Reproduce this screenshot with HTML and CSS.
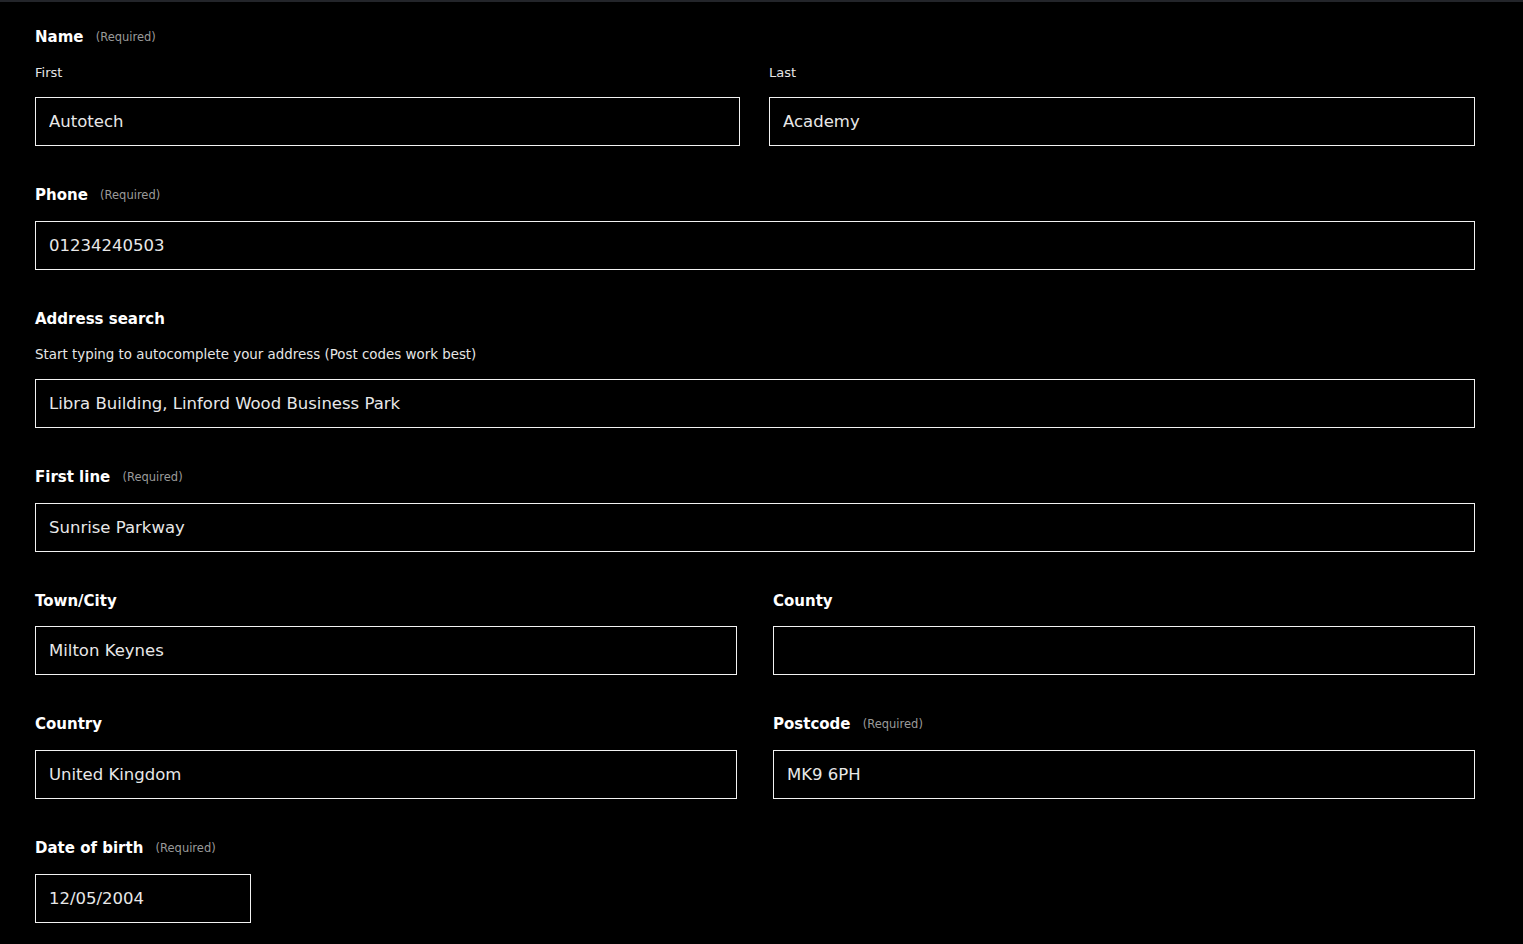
FILE: index.html
```html
<!DOCTYPE html>
<html lang="en">
<head>
<meta charset="utf-8">
<title>Details</title>
<link rel="stylesheet" href="styles.css">
</head>
<body>
<form class="form">
  <fieldset class="group">
    <legend class="label">Name <span class="req">(Required)</span></legend>
    <div class="name-row">
      <div class="sub">
        <label class="sublabel" for="first">First</label>
        <input class="input" id="first" type="text" value="Autotech">
      </div>
      <div class="sub">
        <label class="sublabel" for="last">Last</label>
        <input class="input" id="last" type="text" value="Academy">
      </div>
    </div>
  </fieldset>

  <div class="group">
    <label class="label" for="phone">Phone <span class="req">(Required)</span></label>
    <input class="input" id="phone" type="text" value="01234240503">
  </div>

  <div class="group">
    <label class="label" for="search">Address search</label>
    <p class="help">Start typing to autocomplete your address (Post codes work best)</p>
    <input class="input" id="search" type="text" value="Libra Building, Linford Wood Business Park">
  </div>

  <div class="group">
    <label class="label" for="line1">First line <span class="req">(Required)</span></label>
    <input class="input" id="line1" type="text" value="Sunrise Parkway">
  </div>

  <div class="grid2">
    <div class="group">
      <label class="label" for="town">Town/City</label>
      <input class="input" id="town" type="text" value="Milton Keynes">
    </div>
    <div class="group">
      <label class="label" for="county">County</label>
      <input class="input" id="county" type="text" value="">
    </div>
    <div class="group">
      <label class="label" for="country">Country</label>
      <input class="input" id="country" type="text" value="United Kingdom">
    </div>
    <div class="group">
      <label class="label" for="postcode">Postcode <span class="req">(Required)</span></label>
      <input class="input" id="postcode" type="text" value="MK9 6PH">
    </div>
  </div>

  <div class="group">
    <label class="label" for="dob">Date of birth <span class="req">(Required)</span></label>
    <input class="input input-dob" id="dob" type="text" value="12/05/2004">
  </div>
</form>
</body>
</html>
```
FILE: styles.css
```css
html, body {
  margin: 0;
  padding: 0;
  background: #000;
}
body {
  border-top: 2px solid #23252a;
  font-family: "DejaVu Sans", sans-serif;
  color: #fff;
  height: 942px;
  overflow: hidden;
}
.form {
  padding: 24px 48px 0 35px;
  display: flex;
  flex-direction: column;
  gap: 38px;
}
.group {
  border: 0;
  margin: 0;
  padding: 0;
  min-width: 0;
  display: flex;
  flex-direction: column;
}
.label {
  display: block;
  float: none;
  padding: 1px 0 0;
  box-sizing: border-box;
  font-size: 15px;
  font-weight: 600;
  line-height: 20px;
  height: 20px;
  color: #fff;
  margin: 0 0 17px;
}
fieldset.group > .label {
  width: 100%;
}
.req {
  font-size: 11.5px;
  font-weight: 400;
  color: #9a9a9a;
  margin-left: 7px;
  vertical-align: 1px;
}
.name-row {
  display: grid;
  grid-template-columns: 705fr 706fr;
  column-gap: 29px;
}
.sub {
  min-width: 0;
  display: flex;
  flex-direction: column;
}
.sublabel {
  box-sizing: border-box;
  padding-top: 1px;
  height: 18px;
  font-size: 13px;
  line-height: 18px;
  color: #e6e6e6;
  margin: 0 0 16px;
}
.help {
  box-sizing: border-box;
  padding-top: 1px;
  height: 18px;
  font-size: 13.4px;
  line-height: 18px;
  color: #e6e6e6;
  margin: 0 0 16px;
}
.input {
  box-sizing: border-box;
  height: 49px;
  width: 100%;
  margin: 0;
  border: 1px solid #f2f2f2;
  border-radius: 0;
  background: #000;
  color: #e8e8e8;
  font-family: "DejaVu Sans", sans-serif;
  font-size: 16.5px;
  padding: 0 13px;
  outline: none;
}
.input-dob {
  width: 216px;
}
.grid2 {
  display: grid;
  grid-template-columns: 1fr 1fr;
  column-gap: 36px;
  row-gap: 38px;
}
.grid2 .group:nth-child(-n+2) .label + .input {
  margin-top: -1px;
}
```
